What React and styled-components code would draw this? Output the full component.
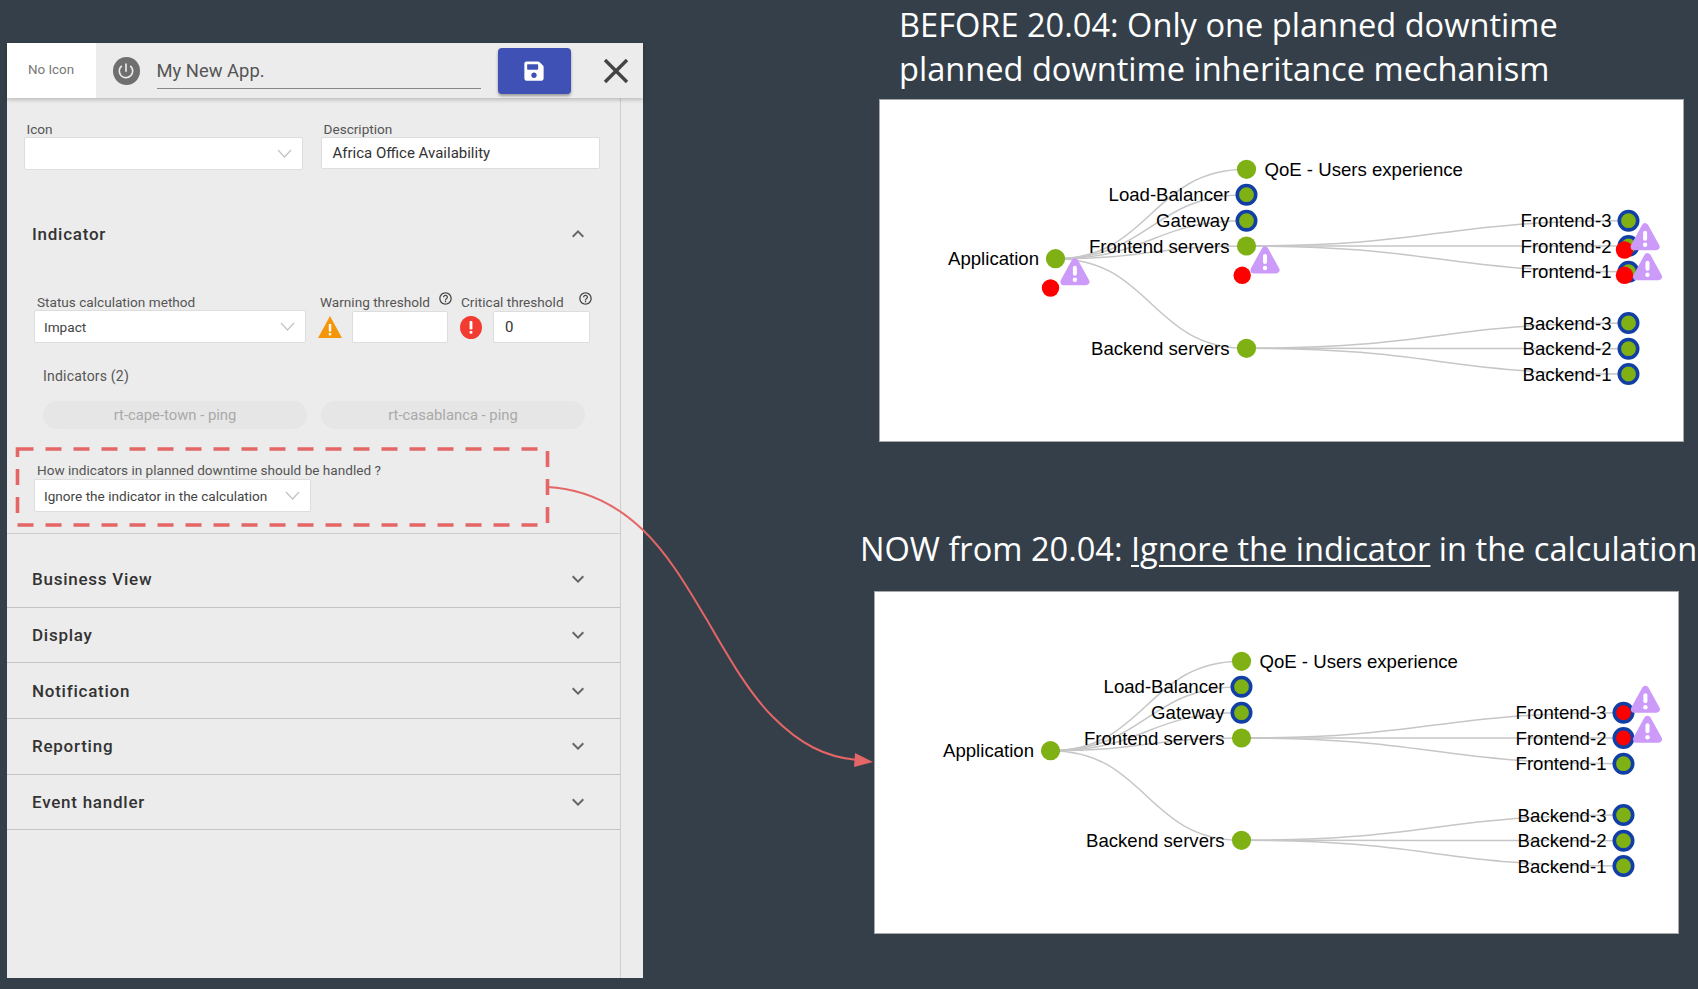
import React from 'react';
import styled, { createGlobalStyle } from 'styled-components';
import { FaSave } from 'react-icons/fa';
import { MdPowerSettingsNew, MdKeyboardArrowDown, MdKeyboardArrowUp, MdHelpOutline } from 'react-icons/md';

const GlobalStyle = createGlobalStyle`
    html, body { margin: 0; padding: 0; background: #353f49; }
    * { box-sizing: border-box; }
`;

const Page = styled.div`
    position: relative;
    display: flex;
    width: 1698px;
    height: 989px;
    overflow: hidden;
    background: #353f49;
    font-family: Roboto, "Liberation Sans", sans-serif;
`;

/* left: the application editor */
const Editor = styled.div`
    display: flex;
    flex-direction: column;
    flex: none;
    width: 636px;
    height: 935px;
    margin: 43px 0 0 6.5px;
    background: #ececec;
`;

const EditorHeader = styled.div`
    position: relative;
    z-index: 1;
    display: flex;
    align-items: center;
    flex: none;
    height: 55px;
    box-shadow: 0 2px 4px rgba(0, 0, 0, 0.2);
`;

const IconTile = styled.div`
    display: flex;
    align-items: center;
    justify-content: center;
    width: 89px;
    height: 100%;
    background: #fff;
    color: #777;
    font-size: 13.4px;
    padding-bottom: 2px;
`;

const PowerBadge = styled.div`
    display: flex;
    align-items: center;
    justify-content: center;
    width: 27px;
    height: 28px;
    margin-left: 17px;
    border-radius: 50%;
    background: #6f6f6f;
    color: #ececec;
    font-size: 20px;
`;

const AppName = styled.div`
    width: 324px;
    height: 31px;
    margin: 6px 0 0 17px;
    border-bottom: 1px solid #888;
    color: #555;
    font-size: 18.4px;
    line-height: 26px;
`;

const SaveButton = styled.button`
    display: flex;
    align-items: center;
    justify-content: center;
    width: 73px;
    height: 46px;
    margin-left: 17px;
    border: 0;
    border-radius: 4px;
    background: #3f51b5;
    color: #fff;
    font-size: 22px;
    box-shadow: 0 2px 3px rgba(0, 0, 0, 0.35);
`;

const CloseIcon = styled.svg`
    display: block;
    width: 26px;
    height: 26px;
    margin-left: 32px;
    stroke: #444;
    stroke-width: 3.4;
`;

const EditorBody = styled.div`
    flex: 1;
    width: 614px;
    border-right: 1px solid #cfcfcf;
`;

const TopFields = styled.div`
    display: grid;
    grid-template-columns: 279px 279px;
    column-gap: 18px;
    padding: 23px 0 0 17px;
`;

const Field = styled.div`
    width: ${({ $width }) => ($width ? `${$width}px` : 'auto')};
`;

const FieldLabel = styled.div`
    height: 16px;
    padding-left: ${({ $inset }) => $inset || 3}px;
    color: #555;
    font-size: 13.6px;
    line-height: 16px;
    white-space: nowrap;
`;

const SelectBox = styled.div`
    display: flex;
    align-items: center;
    justify-content: space-between;
    height: 33px;
    margin-top: ${({ $top }) => $top || 0}px;
    padding: 0 10px 0 9px;
    background: #fff;
    border: 1px solid #ddd;
    border-radius: 2px;
    color: #444;
    font-size: 13.6px;
`;

const InputBox = styled.div`
    display: flex;
    align-items: center;
    flex: ${({ $grow }) => ($grow ? 1 : 'none')};
    height: ${({ $height }) => $height || 32}px;
    padding: 0 11px;
    background: #fff;
    border: 1px solid #ddd;
    border-radius: 2px;
    color: #333;
    font-size: 15px;
`;

const SelectChevron = styled.svg`
    width: 15px;
    height: 9px;
    flex: none;
    fill: none;
    stroke: #c4c4c4;
    stroke-width: 1.3;
`;

const IndicatorHeader = styled.div`
    display: flex;
    align-items: center;
    justify-content: space-between;
    height: 40px;
    margin-top: 44px;
    padding: 0 30px 0 25.5px;
`;

const SectionTitle = styled.div`
    color: #333;
    font-size: 17px;
    font-weight: 500;
    letter-spacing: 0.75px;
`;

const SectionChevron = styled.div`
    display: flex;
    color: #666;
    font-size: 24px;
`;

const StatusRow = styled.div`
    display: flex;
    gap: 12px;
    margin-top: 40px;
    padding-left: 27.5px;
`;

const ThresholdField = styled.div`
    position: relative;
    width: ${({ $width }) => $width}px;
`;

const ThresholdControls = styled.div`
    display: flex;
    align-items: center;
    gap: ${({ $gap }) => $gap}px;
    margin-top: 1px;
`;

const HelpMark = styled.span`
    position: absolute;
    top: -3px;
    left: ${({ $left }) => $left}px;
    display: flex;
    color: #444;
    font-size: 15px;
`;

const IndicatorCount = styled.div`
    margin-top: 25px;
    padding-left: 36.5px;
    color: #555;
    font-size: 14px;
    letter-spacing: 0.2px;
    line-height: 16px;
`;

const ChipRow = styled.div`
    display: flex;
    gap: 14px;
    margin-top: 17px;
    padding-left: 36.5px;
`;

const Chip = styled.div`
    width: 264px;
    height: 28px;
    border-radius: 14px;
    background: #e6e6e6;
    color: #a9a9a9;
    font-size: 14.8px;
    line-height: 28px;
    text-align: center;
`;

const DowntimeField = styled.div`
    width: 277px;
    margin: 33px 0 0 27.5px;
`;

const DowntimeWrap = styled.div`
    padding-bottom: 21px;
    border-bottom: 1px solid #cfcfcf;
`;

const AccordionRow = styled.div`
    display: flex;
    align-items: center;
    justify-content: space-between;
    height: ${({ $first }) => ($first ? 73.7 : 55.7)}px;
    padding: ${({ $first }) => ($first ? 18 : 0)}px 30px 0 25.5px;
    border-bottom: 1.5px solid #c4c4c4;
`;

/* right: the before / now comparison */
const Compare = styled.div`
    display: flex;
    flex-direction: column;
    flex: none;
    width: 837px;
    margin-left: 217.5px;
    padding-top: 3px;
`;

const Headline = styled.div`
    padding-left: ${({ $inset }) => $inset || 0}px;
    margin-top: ${({ $top }) => $top || 0}px;
    color: #fff;
    font-family: "Open Sans", "Noto Sans", sans-serif;
    font-size: 32.6px;
    line-height: 44px;
    white-space: nowrap;

    u { text-underline-offset: 4px; text-decoration-thickness: 2px; }
`;

const ChartPanel = styled.div`
    width: 805px;
    height: 343px;
    margin: ${({ $top }) => $top}px 0 0 ${({ $left }) => $left}px;
    background: #fff;
    border: 1px solid #a8a8a8;
`;

const ChartCanvas = styled.svg`
    display: block;
    width: 100%;
    height: 100%;
`;

const Link = styled.path`
    fill: none;
    stroke: #c6c6c6;
    stroke-width: 1.5;
`;

const NodeLabel = styled.text`
    fill: #000;
    font-family: "Liberation Sans", Arial, sans-serif;
    font-size: 18.6px;
    dominant-baseline: central;
`;

const Overlay = styled.svg`
    position: absolute;
    top: 0;
    left: 0;
    width: 1698px;
    height: 989px;
    pointer-events: none;
`;

const GREEN = '#7fb014';
const RING = '#123fa6';
const RED = '#ff0000';
const PURPLE = '#cc9bfa';

const ROOT = { x: 176, y: 159.7 };
const MID_X = 367;
const LEAF_X = 749;

const BRANCHES = [
    { name: 'QoE - Users experience', y: 70.3, after: true },
    { name: 'Load-Balancer', y: 95.7, ring: true },
    { name: 'Gateway', y: 121.7, ring: true },
    { name: 'Frontend servers', y: 147 },
    { name: 'Backend servers', y: 249.3 },
];

const LEAVES = [
    { name: 'Frontend-3', y: 121.7, parent: 147 },
    { name: 'Frontend-2', y: 147, parent: 147 },
    { name: 'Frontend-1', y: 172.7, parent: 147 },
    { name: 'Backend-3', y: 224, parent: 249.3 },
    { name: 'Backend-2', y: 249.7, parent: 249.3 },
    { name: 'Backend-1', y: 275, parent: 249.3 },
];

const curve = (x0, y0, x1, y1) => {
    const mx = (x0 + x1) / 2;
    return `M${x0} ${y0}C${mx} ${y0} ${mx} ${y1} ${x1} ${y1}`;
};

const WarnTriangle = ({ x, y }) => (
    <g transform={`translate(${x} ${y})`}>
        <path d="M0 -10 L11 10 L-11 10 Z" fill={PURPLE} stroke={PURPLE} strokeWidth="7" strokeLinejoin="round" />
        <rect x="-2" y="-6" width="4" height="10" rx="2" fill="#fff" />
        <circle cx="0" cy="8" r="2.2" fill="#fff" />
    </g>
);

const GraphNode = ({ x, y, ring, fill = GREEN }) => (
    <circle
        cx={x}
        cy={y}
        r={ring ? 9.2 : 9.6}
        fill={fill}
        stroke={ring ? RING : 'none'}
        strokeWidth={ring ? 3.6 : 0}
    />
);

const ServiceTree = ({ redLeaves = [], triangles = [], dots = [] }) => (
    <ChartCanvas viewBox="0.5 1 803 341">
        {BRANCHES.map((b) => <Link key={b.name} d={curve(ROOT.x, ROOT.y, MID_X, b.y)} />)}
        {LEAVES.map((l) => <Link key={l.name} d={curve(MID_X, l.parent, LEAF_X, l.y)} />)}

        <GraphNode x={ROOT.x} y={ROOT.y} />
        <NodeLabel x="159.5" y={ROOT.y} textAnchor="end">Application</NodeLabel>

        {BRANCHES.map((b) => (
            <g key={b.name}>
                <GraphNode x={MID_X} y={b.y} ring={b.ring} />
                <NodeLabel x={b.after ? 385 : 350} y={b.y} textAnchor={b.after ? 'start' : 'end'}>{b.name}</NodeLabel>
            </g>
        ))}

        {LEAVES.map((l) => (
            <g key={l.name}>
                <GraphNode x={LEAF_X} y={l.y} ring fill={redLeaves.includes(l.name) ? RED : GREEN} />
                <NodeLabel x="732" y={l.y} textAnchor="end">{l.name}</NodeLabel>
            </g>
        ))}

        {dots.map(([x, y]) => <circle key={`${x}-${y}`} cx={x} cy={y} r="8.7" fill={RED} />)}
        {triangles.map(([x, y]) => <WarnTriangle key={`${x}-${y}`} x={x} y={y} />)}
    </ChartCanvas>
);

const Chevron = () => (
    <SelectChevron viewBox="0 0 15 9"><polyline points="1,1 7.5,8 14,1" /></SelectChevron>
);

const COLLAPSED = ['Business View', 'Display', 'Notification', 'Reporting', 'Event handler'];

export default function App() {
    return (
        <Page>
            <GlobalStyle />

            <Editor>
                <EditorHeader>
                    <IconTile>No Icon</IconTile>
                    <PowerBadge><MdPowerSettingsNew /></PowerBadge>
                    <AppName>My New App.</AppName>
                    <SaveButton><FaSave /></SaveButton>
                    <CloseIcon viewBox="0 0 26 26">
                        <line x1="2" y1="2" x2="24" y2="24" />
                        <line x1="24" y1="2" x2="2" y2="24" />
                    </CloseIcon>
                </EditorHeader>

                <EditorBody>
                    <TopFields>
                        <Field>
                            <FieldLabel>Icon</FieldLabel>
                            <SelectBox><span /><Chevron /></SelectBox>
                        </Field>
                        <Field>
                            <FieldLabel>Description</FieldLabel>
                            <InputBox $height={32}>Africa Office Availability</InputBox>
                        </Field>
                    </TopFields>

                    <IndicatorHeader>
                        <SectionTitle>Indicator</SectionTitle>
                        <SectionChevron><MdKeyboardArrowUp /></SectionChevron>
                    </IndicatorHeader>

                    <StatusRow>
                        <Field $width={272}>
                            <FieldLabel>Status calculation method</FieldLabel>
                            <SelectBox>Impact<Chevron /></SelectBox>
                        </Field>
                        <ThresholdField $width={130}>
                            <FieldLabel $inset={2}>Warning threshold</FieldLabel>
                            <HelpMark $left={120}><MdHelpOutline /></HelpMark>
                            <ThresholdControls $gap={10}>
                                <svg width="24" height="22" viewBox="0 0 24 22">
                                    <path d="M12 0 L24 22 L0 22 Z" fill="#f5960a" />
                                    <rect x="10.8" y="8" width="2.4" height="7.5" fill="#fff" />
                                    <rect x="10.8" y="17" width="2.4" height="2.4" fill="#fff" />
                                </svg>
                                <InputBox $grow />
                            </ThresholdControls>
                        </ThresholdField>
                        <ThresholdField $width={130}>
                            <FieldLabel $inset={1}>Critical threshold</FieldLabel>
                            <HelpMark $left={118}><MdHelpOutline /></HelpMark>
                            <ThresholdControls $gap={11}>
                                <svg width="22" height="23" viewBox="0 0 22 23">
                                    <ellipse cx="11" cy="11.5" rx="11" ry="11.5" fill="#f23c32" />
                                    <rect x="9.6" y="5" width="2.8" height="8.5" rx="0.8" fill="#fff" />
                                    <rect x="9.6" y="15" width="2.8" height="2.8" rx="0.8" fill="#fff" />
                                </svg>
                                <InputBox $grow>0</InputBox>
                            </ThresholdControls>
                        </ThresholdField>
                    </StatusRow>

                    <IndicatorCount>Indicators (2)</IndicatorCount>

                    <ChipRow>
                        <Chip>rt-cape-town - ping</Chip>
                        <Chip>rt-casablanca - ping</Chip>
                    </ChipRow>

                    <DowntimeWrap>
                        <DowntimeField>
                            <FieldLabel>How indicators in planned downtime should be handled ?</FieldLabel>
                            <SelectBox $top={1}>Ignore the indicator in the calculation<Chevron /></SelectBox>
                        </DowntimeField>
                    </DowntimeWrap>

                    {COLLAPSED.map((title, i) => (
                        <AccordionRow key={title} $first={i === 0}>
                            <SectionTitle>{title}</SectionTitle>
                            <SectionChevron><MdKeyboardArrowDown /></SectionChevron>
                        </AccordionRow>
                    ))}
                </EditorBody>
            </Editor>

            <Compare>
                <Headline $inset={39}>BEFORE 20.04: Only one planned downtime</Headline>
                <Headline $inset={39}>planned downtime inheritance mechanism</Headline>
                <ChartPanel $top={8} $left={18.5}>
                    <ServiceTree
                        dots={[[171, 189], [362.7, 176.3], [745, 151], [745, 176.3]]}
                        triangles={[[195.4, 172.7], [385.5, 161], [765.6, 137.7], [768, 167.7]]}
                    />
                </ChartPanel>
                <Headline $top={85}>NOW from 20.04: <u>Ignore the indicator</u> in the calculation</Headline>
                <ChartPanel $top={20} $left={13.5}>
                    <ServiceTree
                        redLeaves={['Frontend-3', 'Frontend-2']}
                        triangles={[[770.9, 108.3], [773, 138.3]]}
                    />
                </ChartPanel>
            </Compare>

            {/* the red annotation drawn over the screenshot */}
            <Overlay viewBox="0 0 1698 989">
                <rect x="17.5" y="449" width="530" height="76" fill="none" stroke="#e46666" strokeWidth="3.6" strokeDasharray="16 12" />
                <path
                    d="M547 487C590 489 620 508 643 530C670 556 690 592 707 620C728 656 748 692 773 717C800 744 825 757 857 760"
                    fill="none"
                    stroke="#e46666"
                    strokeWidth="2"
                />
                <polygon points="873,762 855,753 854,767" fill="#e46666" />
            </Overlay>
        </Page>
    );
}
